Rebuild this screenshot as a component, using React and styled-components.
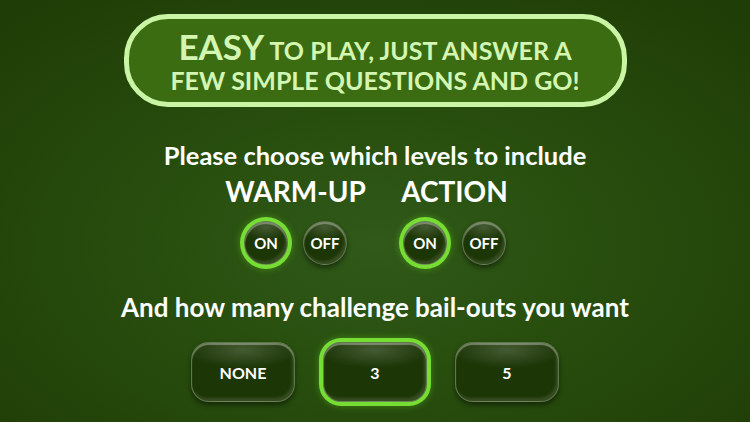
import React, { useState } from "react";
import styled, { createGlobalStyle, css } from "styled-components";

const Global = createGlobalStyle`
  html, body {
    margin: 0;
    padding: 0;
  }
  body {
    width: 750px;
    height: 422px;
    overflow: hidden;
    font-family: Lato, "Open Sans", "Liberation Sans", sans-serif;
  }
`;

const Screen = styled.div`
  width: 750px;
  height: 422px;
  display: flex;
  flex-direction: column;
  align-items: center;
  background: radial-gradient(ellipse 70% 75% at 50% 58%, #30591a 0%, #29500f 35%, #1f3d06 100%);
  color: #fff;
`;

const Banner = styled.div`
  box-sizing: border-box;
  margin-top: 14px;
  width: 503px;
  height: 93px;
  border: 5px solid #c9f5a5;
  border-radius: 44px;
  background: #3b6c12;
  color: #d3f6b2;
  display: flex;
  flex-direction: column;
  align-items: center;
  justify-content: center;
  text-transform: uppercase;
  font-weight: 700;
`;

const BannerLine = styled.div`
  font-size: ${(p) => p.$size}px;
  line-height: ${(p) => p.$lh}px;
  white-space: nowrap;
  strong {
    font-size: 35px;
    font-weight: 700;
  }
`;

const Heading = styled.h2`
  margin: ${(p) => p.$top}px 0 0;
  font-size: ${(p) => p.$size}px;
  font-weight: 700;
  line-height: 30px;
  white-space: nowrap;
`;

const Levels = styled.div`
  margin-top: 6px;
  display: flex;
  gap: 19px;
`;

const Group = styled.div`
  display: flex;
  flex-direction: column;
  align-items: center;
  width: 140px;
`;

const GroupTitle = styled.div`
  font-size: 28px;
  font-weight: 700;
  line-height: 30px;
  white-space: nowrap;
`;

const Toggles = styled.div`
  margin-top: 15px;
  display: flex;
  gap: 15px;
`;

const glossy = css`
  background:
    radial-gradient(ellipse 80% 45% at 50% 12%, rgba(255, 255, 255, 0.18), rgba(255, 255, 255, 0) 70%),
    #1c3606;
  border: 1px solid rgba(220, 240, 200, 0.35);
  box-shadow:
    inset 0 2px 1px rgba(255, 255, 255, 0.35),
    inset -2px -3px 3px rgba(255, 255, 255, 0.12),
    0 3px 5px rgba(0, 0, 0, 0.45);
  color: #fff;
  font-family: inherit;
  font-weight: 700;
  cursor: pointer;
  padding: 0;
`;

const selectedRing = css`
  box-shadow:
    0 0 0 4px #76de32,
    0 0 6px 5px rgba(110, 220, 40, 0.3),
    inset 0 2px 1px rgba(255, 255, 255, 0.35),
    inset -2px -3px 3px rgba(255, 255, 255, 0.12);
`;

const Toggle = styled.button`
  ${glossy}
  width: 44px;
  height: 44px;
  border-radius: 50%;
  font-size: 15px;
  ${(p) => p.$on && selectedRing}
`;

const Choices = styled.div`
  margin-top: 20px;
  display: flex;
  gap: 28px;
`;

const Choice = styled.button`
  ${glossy}
  width: 104px;
  height: 60px;
  border-radius: 18px;
  font-size: 16px;
  ${(p) => p.$on && selectedRing}
`;

function LevelGroup({ title }) {
  const [on, setOn] = useState(true);
  return (
    <Group>
      <GroupTitle>{title}</GroupTitle>
      <Toggles>
        <Toggle $on={on} onClick={() => setOn(true)}>ON</Toggle>
        <Toggle $on={!on} onClick={() => setOn(false)}>OFF</Toggle>
      </Toggles>
    </Group>
  );
}

export default function App() {
  const [bailouts, setBailouts] = useState("3");

  return (
    <>
      <Global />
      <Screen>
        <Banner>
          <BannerLine $size={25} $lh={34}>
            <strong>Easy</strong> to play, just answer a
          </BannerLine>
          <BannerLine $size={25} $lh={26}>Few simple questions and go!</BannerLine>
        </Banner>

        <Heading $top={33} $size={25.5}>Please choose which levels to include</Heading>
        <Levels>
          <LevelGroup title="WARM-UP" />
          <LevelGroup title="ACTION" />
        </Levels>

        <Heading $top={27} $size={26}>And how many challenge bail-outs you want</Heading>
        <Choices>
          {["NONE", "3", "5"].map((c) => (
            <Choice key={c} $on={bailouts === c} onClick={() => setBailouts(c)}>
              {c}
            </Choice>
          ))}
        </Choices>
      </Screen>
    </>
  );
}
